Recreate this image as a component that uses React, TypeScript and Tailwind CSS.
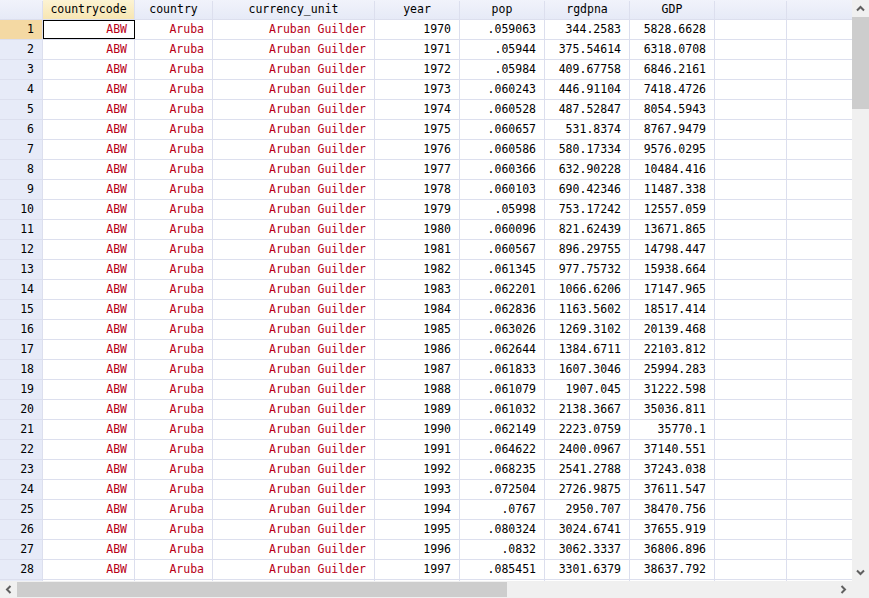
import React from "react";

type Row = {
  year: number;
  pop: string;
  rgdpna: string;
  gdp: string;
};

const pops = [
  ".059063", ".05944", ".05984", ".060243", ".060528", ".060657", ".060586",
  ".060366", ".060103", ".05998", ".060096", ".060567", ".061345", ".062201",
  ".062836", ".063026", ".062644", ".061833", ".061079", ".061032", ".062149",
  ".064622", ".068235", ".072504", ".0767", ".080324", ".0832", ".085451",
];
const rgdp = [
  "344.2583", "375.54614", "409.67758", "446.91104", "487.52847", "531.8374",
  "580.17334", "632.90228", "690.42346", "753.17242", "821.62439", "896.29755",
  "977.75732", "1066.6206", "1163.5602", "1269.3102", "1384.6711", "1607.3046",
  "1907.045", "2138.3667", "2223.0759", "2400.0967", "2541.2788", "2726.9875",
  "2950.707", "3024.6741", "3062.3337", "3301.6379",
];
const gdps = [
  "5828.6628", "6318.0708", "6846.2161", "7418.4726", "8054.5943", "8767.9479",
  "9576.0295", "10484.416", "11487.338", "12557.059", "13671.865", "14798.447",
  "15938.664", "17147.965", "18517.414", "20139.468", "22103.812", "25994.283",
  "31222.598", "35036.811", "35770.1", "37140.551", "37243.038", "37611.547",
  "38470.756", "37655.919", "36806.896", "38637.792",
];

const rows: Row[] = pops.map((p, i) => ({
  year: 1970 + i,
  pop: p,
  rgdpna: rgdp[i],
  gdp: gdps[i],
}));

const font = { fontFamily: '"DejaVu Sans Mono", "Liberation Mono", monospace' };

function Chevron({ dir }: { dir: "up" | "down" | "left" | "right" }) {
  const rot = { up: 0, right: 90, down: 180, left: 270 }[dir];
  return (
    <svg width="9" height="9" viewBox="0 0 9 9" style={{ transform: `rotate(${rot}deg)` }}>
      <path d="M1 6.5 L4.5 3 L8 6.5" fill="none" stroke="#606060" strokeWidth="2" />
    </svg>
  );
}

export default function App() {
  return (
    <div className="flex h-[598px] w-[869px] flex-col overflow-hidden bg-[#f0f0f0] text-[11.5px]" style={font}>
      <div className="flex h-[581px]">
        {/* grid */}
        <div className="h-[581px] w-[852px] overflow-hidden bg-white">
          {/* header */}
          <div className="flex h-[20px] border-b border-[#dcdfee] bg-gradient-to-b from-[#f1f3fb] to-[#e6eaf7] pt-px text-black">
            <div className="w-[43px] shrink-0 border-r border-[#dcdfee]" />
            <div className="-mt-px flex w-[92px] shrink-0 items-center justify-center border-r border-[#dcdfee] bg-gradient-to-b from-[#fcf3d3] to-[#f7e6b3] pt-px">countrycode</div>
            <div className="flex w-[78px] shrink-0 items-center justify-center border-r border-[#dcdfee]">country</div>
            <div className="flex w-[162px] shrink-0 items-center justify-center border-r border-[#dcdfee]">currency_unit</div>
            <div className="flex w-[85px] shrink-0 items-center justify-center border-r border-[#dcdfee]">year</div>
            <div className="flex w-[85px] shrink-0 items-center justify-center border-r border-[#dcdfee]">pop</div>
            <div className="flex w-[85px] shrink-0 items-center justify-center border-r border-[#dcdfee]">rgdpna</div>
            <div className="flex w-[85px] shrink-0 items-center justify-center border-r border-[#dcdfee]">GDP</div>
            <div className="w-[72px] shrink-0 border-r border-[#dcdfee]" />
            <div className="w-[66px] shrink-0" />
          </div>

          {rows.map((r, i) => (
            <div key={r.year} className="flex h-[20px] border-b border-[#dcdfee]">
              <div
                className={`flex w-[43px] shrink-0 items-center justify-end border-r border-[#dcdfee] pt-px pr-[8px] text-black ${
                  i === 0 ? "bg-[#f4d9a3]" : "bg-[#e7ebf8]"
                }`}
              >
                {i + 1}
              </div>
              <div
                className={`flex w-[92px] shrink-0 items-center justify-end pt-px pr-[7px] text-[#b80018] ${
                  i === 0 ? "border border-black" : "border-r border-[#dcdfee]"
                }`}
              >
                ABW
              </div>
              <div className="flex w-[78px] shrink-0 items-center justify-end border-r border-[#dcdfee] pt-px pr-[8px] text-[#b80018]">Aruba</div>
              <div className="flex w-[162px] shrink-0 items-center justify-end border-r border-[#dcdfee] pt-px pr-[8px] text-[#b80018]">Aruban Guilder</div>
              <div className="flex w-[85px] shrink-0 items-center justify-end border-r border-[#dcdfee] pt-px pr-[8px] text-black">{r.year}</div>
              <div className="flex w-[85px] shrink-0 items-center justify-end border-r border-[#dcdfee] pt-px pr-[8px] text-black">{r.pop}</div>
              <div className="flex w-[85px] shrink-0 items-center justify-end border-r border-[#dcdfee] pt-px pr-[8px] text-black">{r.rgdpna}</div>
              <div className="flex w-[85px] shrink-0 items-center justify-end border-r border-[#dcdfee] pt-px pr-[8px] text-black">{r.gdp}</div>
              <div className="w-[72px] shrink-0 border-r border-[#dcdfee]" />
              <div className="w-[66px] shrink-0" />
            </div>
          ))}

          {/* partly visible next row */}
          <div className="flex h-[20px]">
            <div className="w-[43px] shrink-0 border-r border-[#dcdfee] bg-[#e7ebf8]" />
            <div className="w-[92px] shrink-0 border-r border-[#dcdfee]" />
            <div className="w-[78px] shrink-0 border-r border-[#dcdfee]" />
            <div className="w-[162px] shrink-0 border-r border-[#dcdfee]" />
            <div className="w-[85px] shrink-0 border-r border-[#dcdfee]" />
            <div className="w-[85px] shrink-0 border-r border-[#dcdfee]" />
            <div className="w-[85px] shrink-0 border-r border-[#dcdfee]" />
            <div className="w-[85px] shrink-0 border-r border-[#dcdfee]" />
            <div className="w-[72px] shrink-0 border-r border-[#dcdfee]" />
            <div className="w-[66px] shrink-0" />
          </div>
        </div>

        {/* vertical scrollbar */}
        <div className="flex w-[17px] flex-col bg-[#f0f0f0]">
          <div className="flex h-[17px] items-center justify-center">
            <Chevron dir="up" />
          </div>
          <div className="h-[92px] bg-[#cdcdcd]" />
          <div className="flex-1" />
          <div className="flex h-[17px] items-center justify-center">
            <Chevron dir="down" />
          </div>
        </div>
      </div>

      {/* horizontal scrollbar */}
      <div className="flex h-[17px]">
        <div className="flex w-[852px] items-center">
          <div className="flex h-[17px] w-[17px] items-center justify-center">
            <Chevron dir="left" />
          </div>
          <div className="h-[15px] w-[490px] bg-[#cdcdcd]" />
          <div className="flex-1" />
          <div className="flex h-[17px] w-[17px] items-center justify-center">
            <Chevron dir="right" />
          </div>
        </div>
        <div className="w-[17px]" />
      </div>
    </div>
  );
}
